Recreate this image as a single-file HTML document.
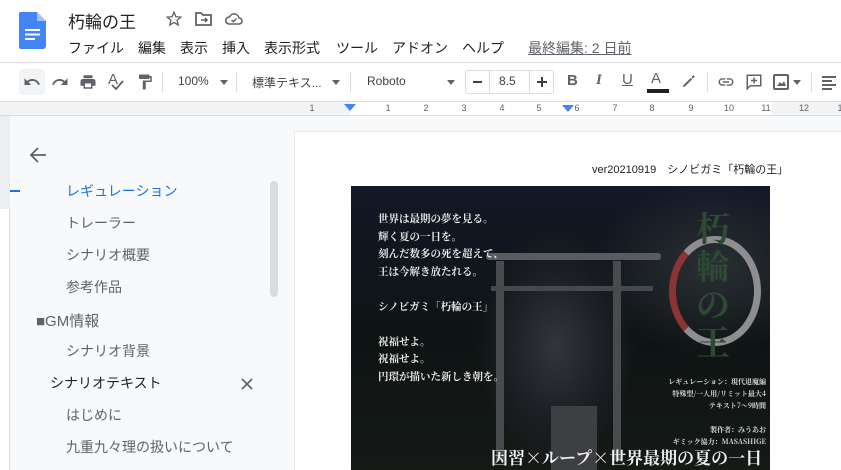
<!DOCTYPE html>
<html><head><meta charset="utf-8"><style>
*{margin:0;padding:0;box-sizing:border-box}
body{width:841px;height:470px;overflow:hidden;background:#f8f9fa;font-family:"Liberation Sans","Noto Sans CJK JP",sans-serif;position:relative;color:#202124}
.a{position:absolute;white-space:nowrap}
.ic{position:absolute}
.m{position:absolute;top:38px;font-size:14px;color:#202124}
.r{position:absolute;top:102px;font-size:9px;line-height:13px;color:#5f6368;transform:translateX(-50%)}
</style></head><body>
<div class="a" style="left:0;top:0;width:841px;height:62px;background:#fff"></div>
<svg class="ic" style="left:19px;top:12px" width="27" height="37" viewBox="0 0 27 37"><path d="M2 0h16l9 9v25a3 3 0 0 1-3 3H2a2 2 0 0 1-2-2V2a2 2 0 0 1 2-2z" fill="#4285f4"/><path d="M18 0v9h9z" fill="#a1c2fa"/><rect x="6" y="17" width="15" height="2" fill="#fff"/><rect x="6" y="21.5" width="15" height="2" fill="#fff"/><rect x="6" y="26" width="10" height="2" fill="#fff"/></svg>
<div class="a" style="left:68px;top:8px;font-size:17px;color:#202124">朽輪の王</div>
<svg class="ic" style="left:165px;top:10px" width="18" height="18" viewBox="0 0 24 24"><path d="M12 3l2.6 6 6.4.5-4.9 4.2 1.5 6.3L12 16.6 6.4 20l1.5-6.3L3 9.5 9.4 9z" fill="none" stroke="#5f6368" stroke-width="1.8"/></svg>
<svg class="ic" style="left:195px;top:11px" width="18" height="16" viewBox="0 0 18 16"><path d="M1 2h5l2 2h8v10H1z" fill="none" stroke="#5f6368" stroke-width="1.8"/><path d="M6 9h6M10 7l2 2-2 2" fill="none" stroke="#5f6368" stroke-width="1.6"/></svg>
<svg class="ic" style="left:225px;top:12px" width="18" height="14" viewBox="0 0 18 14"><path d="M4 12h10a3 3 0 0 0 0-6 5 5 0 0 0-9.5-1A3.5 3.5 0 0 0 4 12z" fill="none" stroke="#5f6368" stroke-width="1.6"/><path d="M6.5 8l2 1.8 3-3.3" fill="none" stroke="#5f6368" stroke-width="1.4"/></svg>
<div class="m" style="left:68px">ファイル</div>
<div class="m" style="left:138px">編集</div>
<div class="m" style="left:180px">表示</div>
<div class="m" style="left:222px">挿入</div>
<div class="m" style="left:264px">表示形式</div>
<div class="m" style="left:336px">ツール</div>
<div class="m" style="left:392px">アドオン</div>
<div class="m" style="left:462px">ヘルプ</div>
<div class="a" style="left:528px;top:38px;font-size:14px;color:#5f6368;text-decoration:underline">最終編集: 2 日前</div>
<div class="a" style="left:0;top:62px;width:841px;height:1px;background:#dadce0"></div>
<div class="a" style="left:0;top:63px;width:841px;height:38px;background:#fff"></div>
<div class="a" style="left:19px;top:69px;width:26px;height:26px;background:#f1f3f4;border-radius:3px"></div>
<svg class="ic" style="left:23px;top:73px" width="18" height="18" viewBox="0 0 24 24"><path d="M12.5 8c-2.6 0-5 1-6.9 2.6L2 7v9h9l-3.6-3.6c1.4-1.2 3.2-1.9 5.1-1.9 3.5 0 6.5 2.3 7.6 5.5l2.4-.8C21 11 17 8 12.5 8z" fill="#5f6368"/></svg>
<svg class="ic" style="left:51px;top:73px" width="18" height="18" viewBox="0 0 24 24"><path d="M11.5 8c2.6 0 5 1 6.9 2.6L22 7v9h-9l3.6-3.6c-1.4-1.2-3.2-1.9-5.1-1.9-3.5 0-6.5 2.3-7.6 5.5L1.5 15.2C3 11 7 8 11.5 8z" fill="#5f6368"/></svg>
<svg class="ic" style="left:79px;top:73px" width="18" height="18" viewBox="0 0 24 24"><path d="M19 8H5c-1.7 0-3 1.3-3 3v6h4v4h12v-4h4v-6c0-1.7-1.3-3-3-3zm-3 11H8v-5h8v5zM18 3H6v4h12z" fill="#5f6368"/></svg>
<div class="a" style="left:108px;top:71px;font-size:15px;color:#5f6368">A</div>
<svg class="ic" style="left:110px;top:80px" width="14" height="12" viewBox="0 0 14 12"><path d="M2 5l4 4 7-8" fill="none" stroke="#5f6368" stroke-width="1.8"/></svg>
<svg class="ic" style="left:136px;top:73px" width="18" height="18" viewBox="0 0 24 24"><path d="M18 4V3c0-.6-.4-1-1-1H5c-.6 0-1 .4-1 1v4c0 .6.4 1 1 1h12c.6 0 1-.4 1-1V6h1v4H9v11c0 .6.4 1 1 1h2c.6 0 1-.4 1-1v-9h8V4h-3z" fill="#5f6368"/></svg>
<div class="a" style="left:162px;top:72px;width:1px;height:20px;background:#dadce0"></div>
<div class="a" style="left:178px;top:74px;font-size:12px;color:#3c4043">100%</div>
<div class="a" style="left:220px;top:80px;border:4px solid transparent;border-top:5px solid #5f6368"></div>
<div class="a" style="left:236px;top:72px;width:1px;height:20px;background:#dadce0"></div>
<div class="a" style="left:252px;top:74px;font-size:12px;color:#3c4043">標準テキス...</div>
<div class="a" style="left:332px;top:80px;border:4px solid transparent;border-top:5px solid #5f6368"></div>
<div class="a" style="left:350px;top:72px;width:1px;height:20px;background:#dadce0"></div>
<div class="a" style="left:367px;top:74px;font-size:12px;color:#3c4043">Roboto</div>
<div class="a" style="left:447px;top:80px;border:4px solid transparent;border-top:5px solid #5f6368"></div>
<div class="a" style="left:465px;top:70px;width:89px;height:24px;border:1px solid #dadce0;border-radius:3px"></div>
<div class="a" style="left:489px;top:70px;width:1px;height:24px;background:#dadce0"></div>
<div class="a" style="left:529px;top:70px;width:1px;height:24px;background:#dadce0"></div>
<div class="a" style="left:473px;top:81px;width:9px;height:2px;background:#3c4043"></div>
<div class="a" style="left:499px;top:74px;font-size:12px;color:#3c4043">8.5</div>
<div class="a" style="left:537px;top:81px;width:10px;height:2px;background:#3c4043"></div>
<div class="a" style="left:541px;top:77px;width:2px;height:10px;background:#3c4043"></div>
<div class="a" style="left:567px;top:72px;font-size:15px;font-weight:bold;color:#5f6368">B</div>
<div class="a" style="left:596px;top:72px;font-size:15px;font-style:italic;font-family:'Liberation Serif',serif;font-weight:bold;color:#5f6368">I</div>
<div class="a" style="left:622px;top:71px;font-size:15px;color:#5f6368;text-decoration:underline">U</div>
<div class="a" style="left:651px;top:70px;font-size:15px;color:#5f6368">A</div>
<div class="a" style="left:647px;top:89px;width:22px;height:4px;background:#202124"></div>
<svg class="ic" style="left:680px;top:73px" width="17" height="17" viewBox="0 0 24 24"><path d="M4 20l3-1 10-10-2-2L5 17zM16 6l2 2 3-3-2-2z" fill="#5f6368"/></svg>
<div class="a" style="left:707px;top:72px;width:1px;height:20px;background:#dadce0"></div>
<svg class="ic" style="left:716px;top:73px" width="20" height="18" viewBox="0 0 24 24"><path d="M3.9 12c0-1.7 1.4-3.1 3.1-3.1h4V7H7a5 5 0 0 0 0 10h4v-1.9H7c-1.7 0-3.1-1.4-3.1-3.1zM8 13h8v-2H8zm9-6h-4v1.9h4c1.7 0 3.1 1.4 3.1 3.1s-1.4 3.1-3.1 3.1h-4V17h4a5 5 0 0 0 0-10z" fill="#5f6368"/></svg>
<svg class="ic" style="left:745px;top:73px" width="18" height="18" viewBox="0 0 24 24"><path d="M3 3h18v14H7l-4 4z" fill="none" stroke="#5f6368" stroke-width="2"/><path d="M12 6v8M8 10h8" stroke="#5f6368" stroke-width="2"/></svg>
<svg class="ic" style="left:773px;top:74px" width="16" height="16" viewBox="0 0 16 16"><rect x="1" y="1" width="14" height="14" rx="1" fill="none" stroke="#5f6368" stroke-width="2"/><path d="M4 12l3-4 2 2 2-3 2 5z" fill="#5f6368"/></svg>
<div class="a" style="left:793px;top:80px;border:4px solid transparent;border-top:5px solid #5f6368"></div>
<div class="a" style="left:811px;top:72px;width:1px;height:20px;background:#dadce0"></div>
<div class="a" style="left:822px;top:76px;width:14px;height:2px;background:#5f6368"></div>
<div class="a" style="left:822px;top:80px;width:10px;height:2px;background:#5f6368"></div>
<div class="a" style="left:822px;top:84px;width:14px;height:2px;background:#5f6368"></div>
<div class="a" style="left:822px;top:88px;width:10px;height:2px;background:#5f6368"></div>
<div class="a" style="left:0;top:101px;width:841px;height:1px;background:#dadce0"></div>
<div class="a" style="left:0;top:102px;width:841px;height:14px;background:#f1f3f4"></div>
<div class="a" style="left:350px;top:102px;width:422px;height:14px;background:#fff"></div>
<div class="a" style="left:0;top:115px;width:841px;height:1px;background:#dadce0"></div>
<div class="r" style="left:312px">1</div>
<div class="r" style="left:388px">1</div>
<div class="r" style="left:426px">2</div>
<div class="r" style="left:464px">3</div>
<div class="r" style="left:502px">4</div>
<div class="r" style="left:539px">5</div>
<div class="r" style="left:577px">6</div>
<div class="r" style="left:615px">7</div>
<div class="r" style="left:652px">8</div>
<div class="r" style="left:691px">9</div>
<div class="r" style="left:729px">10</div>
<div class="r" style="left:766px">11</div>
<div class="r" style="left:804px">12</div>
<div class="r" style="left:840px">1</div>
<div class="a" style="left:344px;top:104px;border:6px solid transparent;border-top:7px solid #4285f4"></div>
<div class="a" style="left:556px;top:105px;border:6px solid transparent;border-top:7px solid #4285f4;transform:translateX(6px)"></div>
<div class="a" style="left:0;top:116px;width:10px;height:354px;background:#fff;border-right:1px solid #dadce0"></div>
<div class="a" style="left:0;top:116px;width:10px;height:93px;background:#eceef0"></div>
<svg class="ic" style="left:29px;top:146px" width="18" height="18" viewBox="0 0 18 18"><path d="M17 9H2M9 2L2 9l7 7" fill="none" stroke="#5f6368" stroke-width="1.8"/></svg>
<div class="a" style="left:10px;top:190px;width:10px;height:1.5px;background:#1a73e8"></div>
<div class="a" style="left:66px;top:181px;font-size:14px;color:#1a73e8">レギュレーション</div>
<div class="a" style="left:66px;top:213px;font-size:14px;color:#5f6368">トレーラー</div>
<div class="a" style="left:66px;top:245px;font-size:14px;color:#5f6368">シナリオ概要</div>
<div class="a" style="left:66px;top:277px;font-size:14px;color:#5f6368">参考作品</div>
<div class="a" style="left:36px;top:310px;font-size:15px;color:#5f6368">■GM情報</div>
<div class="a" style="left:66px;top:341px;font-size:14px;color:#5f6368">シナリオ背景</div>
<div class="a" style="left:50px;top:373px;font-size:14px;color:#202124">シナリオテキスト</div>
<svg class="ic" style="left:241px;top:378px" width="12" height="12" viewBox="0 0 12 12"><path d="M1 1l10 10M11 1L1 11" stroke="#5f6368" stroke-width="1.7"/></svg>
<div class="a" style="left:66px;top:405px;font-size:14px;color:#5f6368">はじめに</div>
<div class="a" style="left:66px;top:437px;font-size:14px;color:#5f6368">九重九々理の扱いについて</div>
<div class="a" style="left:270px;top:181px;width:8px;height:116px;background:#dadce0;border-radius:4px"></div>
<div class="a" style="left:294px;top:131px;width:547px;height:339px;background:#fff;border-left:1px solid #e8eaed;border-top:1px solid #e8eaed"></div>
<div class="a" style="left:592px;top:161px;font-size:11px;color:#202124">ver20210919　シノビガミ「朽輪の王」</div>
<div class="a" style="left:351px;top:186px;width:419px;height:284px;background:radial-gradient(ellipse 80px 120px at 205px 160px,#33353b 0%,#1c1f24 60%,transparent 100%),radial-gradient(ellipse 120px 90px at 360px 80px,#2a2f33,transparent),linear-gradient(180deg,#121826 0%,#0e1413 55%,#151a17 100%);overflow:hidden">
<div class="a" style="left:145px;top:75px;width:8px;height:200px;background:#4a4b4f"></div>
<div class="a" style="left:262px;top:75px;width:8px;height:200px;background:#4a4b4f"></div>
<div class="a" style="left:135px;top:67px;width:175px;height:7px;background:#5a5b5f;border-radius:3px"></div>
<div class="a" style="left:140px;top:100px;width:162px;height:5px;background:#47484c"></div>
<div class="a" style="left:200px;top:220px;width:46px;height:64px;background:#3e3f42"></div>
<div class="a" style="left:27px;top:24px;font-family:'Noto Serif CJK SC',serif;font-weight:bold;font-size:10.5px;line-height:17.5px;color:#e8e8e8;white-space:pre">世界は最期の夢を見る。
輝く夏の一日を。
刻んだ数多の死を超えて、
王は今解き放たれる。

シノビガミ「朽輪の王」

祝福せよ。
祝福せよ。
円環が描いた新しき朝を。</div>
<div class="a" style="left:318px;top:50px;width:92px;height:110px;border:7px solid #8e8d90;border-radius:50%;border-left-color:#8a3434"></div>
<div class="a" style="left:345px;top:22px;font-family:'Noto Serif CJK SC',serif;font-weight:bold;font-size:34px;line-height:38px;color:#2e4a33;white-space:pre">朽
輪
の
王</div>
<div class="a" style="right:4px;top:190px;text-align:right;font-family:'Noto Serif CJK SC',serif;font-weight:bold;font-size:7px;line-height:12px;color:#ddd;white-space:pre">レギュレーション：現代退魔編
特殊型/一人用/リミット最大4
テキスト7～9時間

製作者：みうあお
ギミック協力：MASASHIGE</div>
<div class="a" style="left:140px;top:258px;font-family:'Noto Serif CJK SC',serif;font-weight:bold;font-size:17px;color:#f0f0f0">因習×ループ×世界最期の夏の一日</div>
</div>
</body></html>
